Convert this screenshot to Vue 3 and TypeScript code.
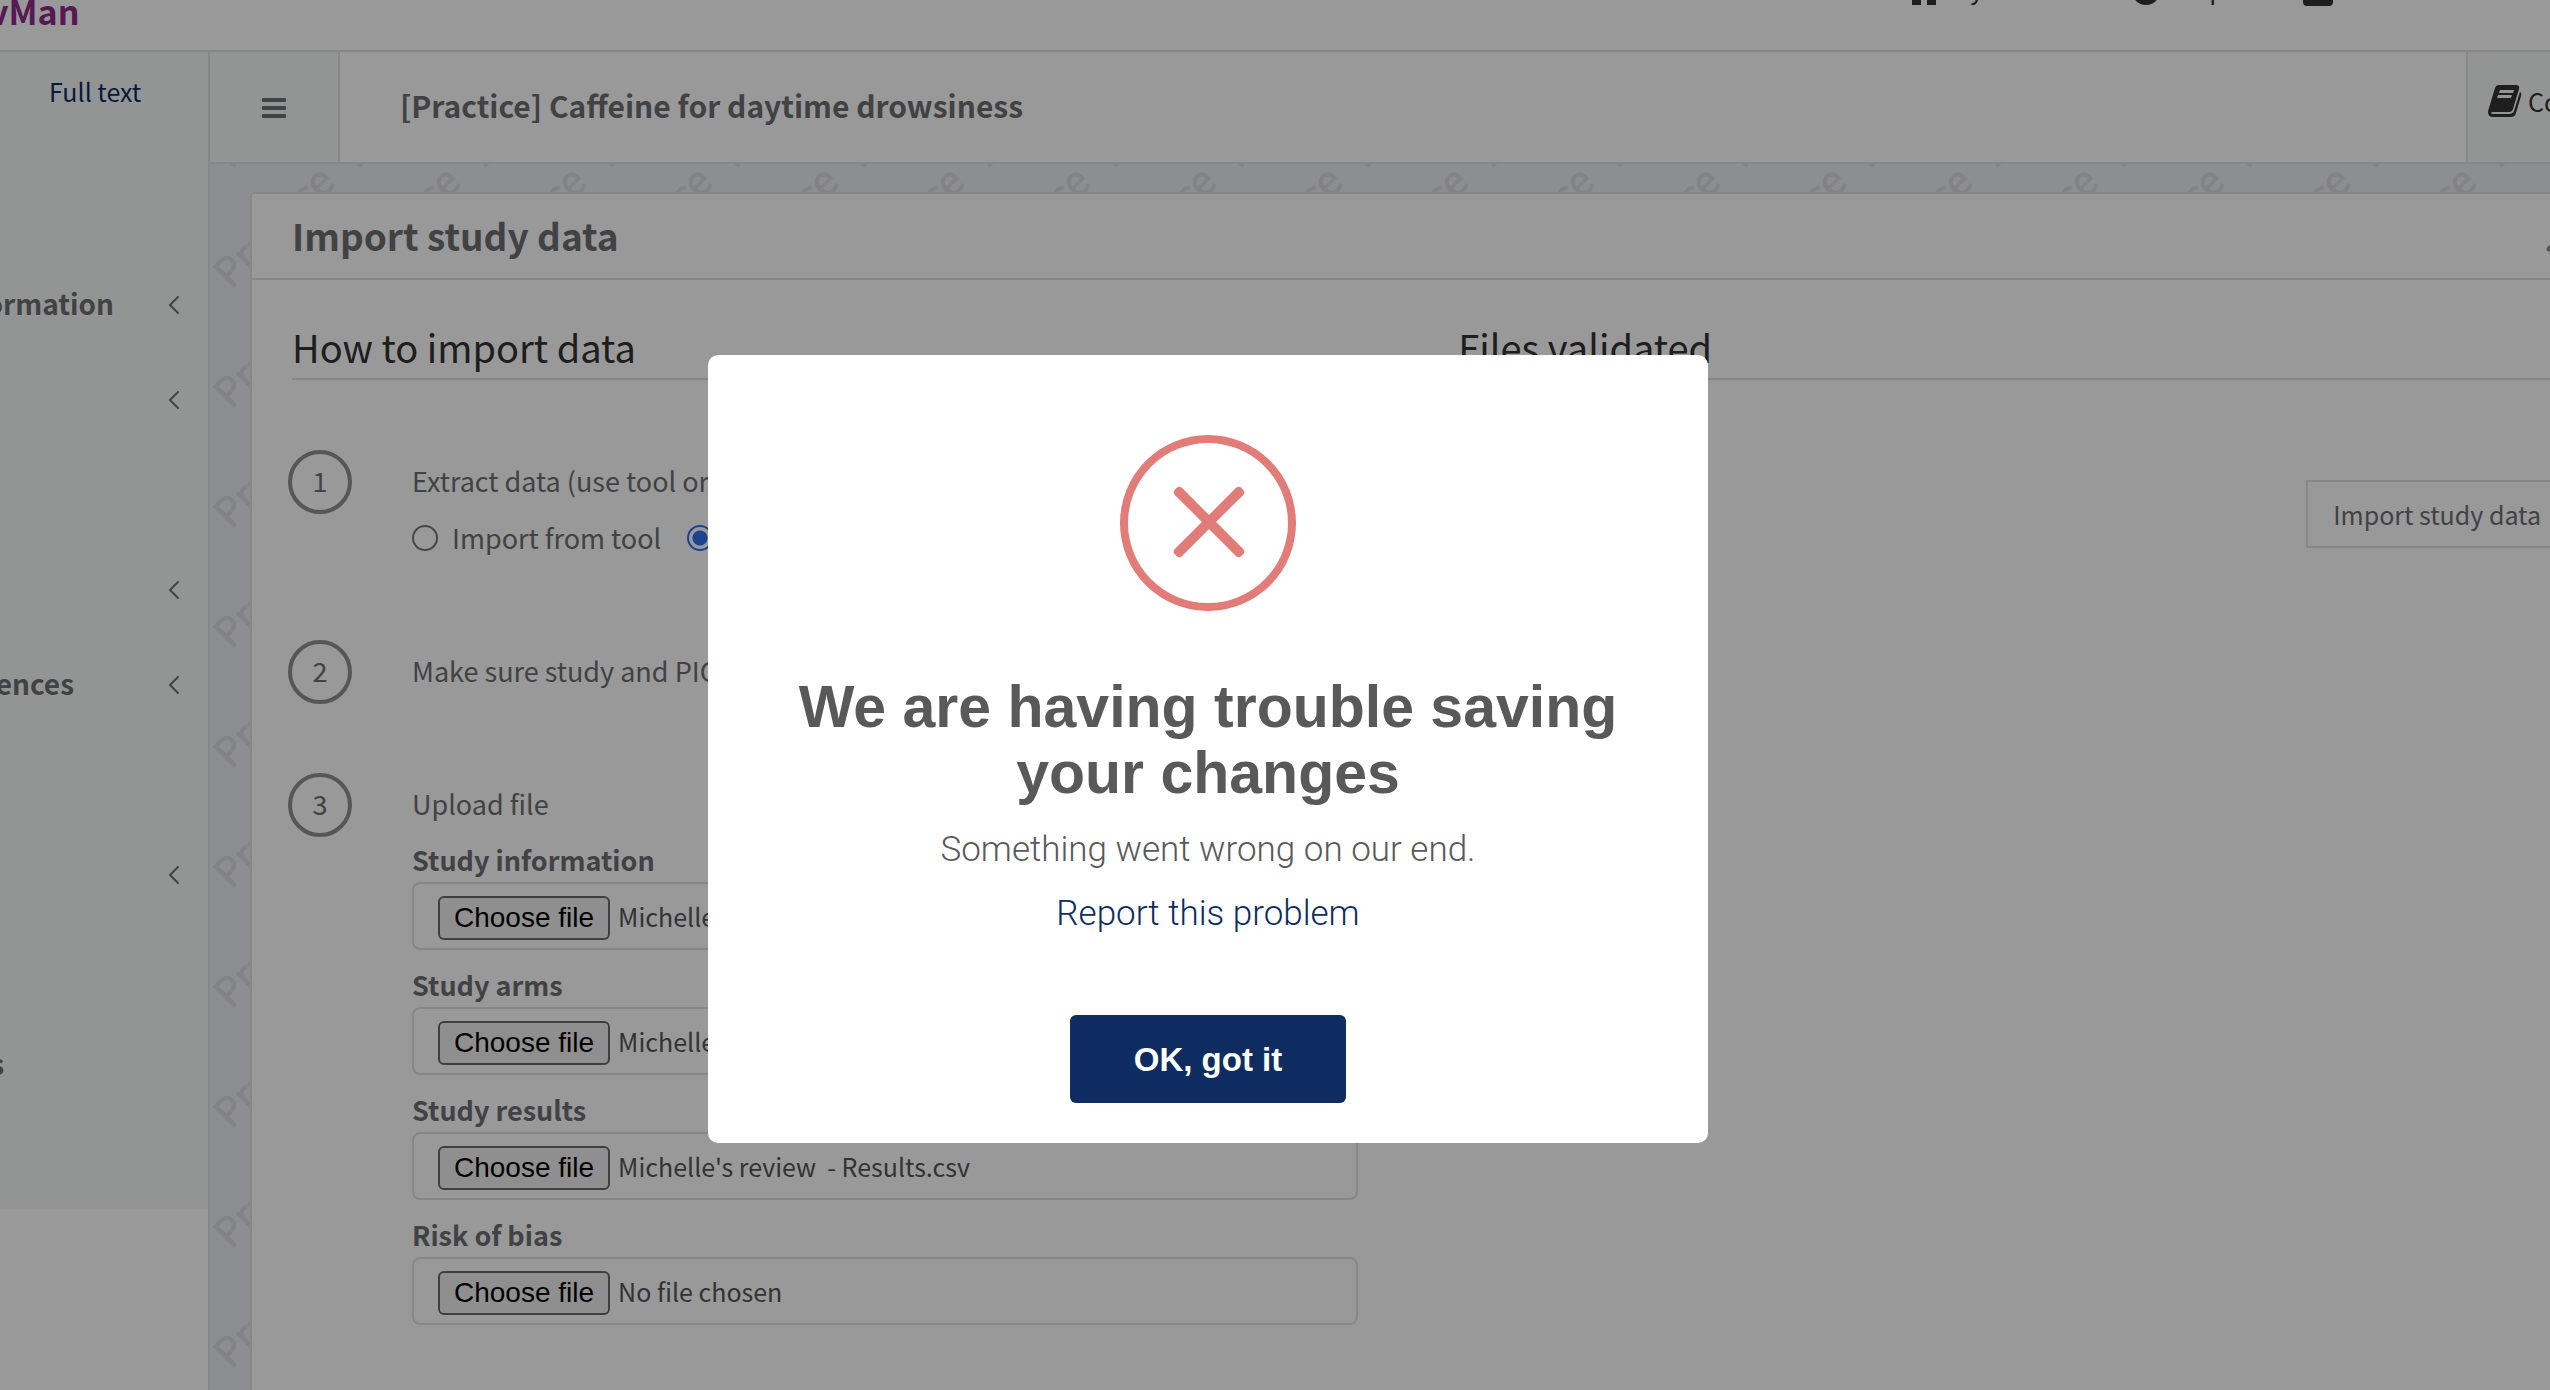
<script setup lang="ts">
import { ref } from 'vue'

interface NavItem {
  label: string
  width: number
  expandable: boolean
}

interface FileField {
  id: string
  label: string
  file: string
}

const navItems: NavItem[] = [
  { label: 'ormation', width: 114, expandable: true },
  { label: '', width: 74, expandable: true },
  { label: '', width: 74, expandable: false },
  { label: '', width: 74, expandable: true },
  { label: 'ences', width: 74, expandable: true },
  { label: '', width: 74, expandable: false },
  { label: '', width: 74, expandable: true },
  { label: '', width: 74, expandable: false },
  { label: 's', width: 4, expandable: false },
  { label: '', width: 74, expandable: false },
]

const fields = ref<FileField[]>([
  { id: 'study-information', label: 'Study information', file: "Michelle's review  - Info.csv" },
  { id: 'study-arms', label: 'Study arms', file: "Michelle's review  - Arms.csv" },
  { id: 'study-results', label: 'Study results', file: "Michelle's review  - Results.csv" },
  { id: 'risk-of-bias', label: 'Risk of bias', file: 'No file chosen' },
])

const source = ref('csv')

function browse(id: string) {
  document.getElementById(id)?.click()
}

function pick(field: FileField, event: Event) {
  const chosen = (event.target as HTMLInputElement).files?.[0]
  field.file = chosen ? chosen.name : 'No file chosen'
}
</script>

<template>
  <div class="app">
    <header class="topbar">
      <a class="brand" href="#">vMan</a>
      <nav class="topnav">
        <a href="#" class="top-home">
          <svg width="32" height="28" viewBox="0 0 32 28"><path d="M16 0 32 14h-4v14h-9v-9h-6v9H4V14H0z" /></svg>
          My Reviews
        </a>
        <a href="#" class="top-help">
          <svg width="28" height="28" viewBox="0 0 28 28">
            <circle cx="14" cy="14" r="14" />
            <path d="M10 11a4 4 0 1 1 6 3q-2 1-2 3M14 20v3" fill="none" stroke="#fff" stroke-width="3" />
          </svg>
          Help
        </a>
        <a href="#" class="top-user">
          <svg width="30" height="30" viewBox="0 0 30 30"><circle cx="15" cy="7" r="7" /><path d="M0 22q0-7 7-7h16q7 0 7 7v4q0 4-4 4H4q-4 0-4-4z" /></svg>
          Cochrane member
        </a>
      </nav>
    </header>

    <div class="shell">
      <aside class="sidebar">
        <nav class="menu">
          <div class="submenu"><a href="#">Full text</a></div>
          <a v-for="(item, i) in navItems" :key="i" class="menu-item" href="#">
            <span class="menu-label" :style="{ width: item.width + 'px' }">{{ item.label }}</span>
            <svg v-if="item.expandable" class="menu-arrow" width="12" height="20" viewBox="0 0 12 20">
              <path d="M10 2 2 10l8 8" />
            </svg>
          </a>
        </nav>
      </aside>

      <div class="main">
        <div class="titlebar">
          <button class="burger" type="button" aria-label="Toggle menu">
            <svg width="24" height="20" viewBox="0 0 24 20">
              <rect width="24" height="4" rx="1" /><rect y="8" width="24" height="4" rx="1" /><rect y="16" width="24" height="4" rx="1" />
            </svg>
          </button>
          <h1 class="review-title">[Practice] Caffeine for daytime drowsiness</h1>
          <button class="comments" type="button">
            <svg width="34" height="32" viewBox="0 0 34 32">
              <path fill-rule="evenodd" d="M11 0h17q4 0 3 4l-6 20q-1 3-4 3H5q-2 0-2 1t2 1h16q4 0 5-3L32 7q2 1 1 4l-5 17q-1 4-5 4H5q-5 0-5-5 0-2 1-4L7 3q1-3 4-3zM12 5l-1 3h14l1-3zM10 10l-1 3h14l1-3z" />
            </svg>
            <span>Comments</span>
          </button>
        </div>

        <div class="canvas">
          <svg class="watermark" width="100%" height="100%" aria-hidden="true">
            <defs>
              <pattern id="practice" width="126" height="120" patternUnits="userSpaceOnUse">
                <text transform="translate(21 126) rotate(-45)">Practice</text>
                <text transform="translate(-105 126) rotate(-45)">Practice</text>
                <text transform="translate(21 6) rotate(-45)">Practice</text>
                <text transform="translate(21 246) rotate(-45)">Practice</text>
                <text transform="translate(-105 246) rotate(-45)">Practice</text>
              </pattern>
            </defs>
            <rect width="100%" height="100%" fill="url(#practice)" />
          </svg>

          <section class="card">
            <div class="card-head">
              <h2>Import study data</h2>
              <button class="collapse" type="button" aria-label="Collapse">
                <svg width="22" height="14" viewBox="0 0 22 14"><path d="M3 9 11 2l8 7" fill="none" stroke="currentColor" stroke-width="5" stroke-linecap="round" /></svg>
              </button>
            </div>
            <div class="card-body">
              <div class="column">
                <h3>How to import data</h3>
                <ol class="steps">
                  <li class="step">
                    <span class="number">1</span>
                    <div class="step-body">
                      <p>Extract data (use tool or CSV)</p>
                      <div class="radios">
                        <label><input v-model="source" type="radio" name="source" value="tool" />Import from tool</label>
                        <label><input v-model="source" type="radio" name="source" value="csv" />Import from CSV</label>
                      </div>
                    </div>
                  </li>
                  <li class="step">
                    <span class="number">2</span>
                    <div class="step-body"><p>Make sure study and PICO names match</p></div>
                  </li>
                  <li class="step">
                    <span class="number">3</span>
                    <div class="step-body">
                      <p>Upload file</p>
                      <div class="files">
                        <div v-for="field in fields" :key="field.id" class="field">
                          <label :for="field.id">{{ field.label }}</label>
                          <div class="file-box">
                            <button type="button" @click="browse(field.id)">Choose file</button>
                            <span class="file-name">{{ field.file }}</span>
                            <input :id="field.id" type="file" accept=".csv" hidden @change="pick(field, $event)" />
                          </div>
                        </div>
                      </div>
                    </div>
                  </li>
                </ol>
              </div>
              <div class="column">
                <h3>Files validated</h3>
                <button class="import" type="button">Import study data</button>
              </div>
            </div>
          </section>
        </div>
      </div>
    </div>

    <div class="overlay">
      <div class="modal" role="alertdialog" aria-labelledby="modal-title" aria-describedby="modal-text">
        <svg class="modal-icon" width="176" height="176" viewBox="0 0 176 176">
          <circle cx="88" cy="88" r="84" fill="none" stroke="#e27c79" stroke-width="8" />
          <g transform="translate(89 87)" fill="#e27c79">
            <rect x="-47" y="-5" width="94" height="10" rx="4" transform="rotate(45)" />
            <rect x="-47" y="-5" width="94" height="10" rx="4" transform="rotate(-45)" />
          </g>
        </svg>
        <h2 id="modal-title">We are having trouble saving your changes</h2>
        <p id="modal-text">Something went wrong on our end.</p>
        <a href="#">Report this problem</a>
        <button type="button">OK, got it</button>
      </div>
    </div>
  </div>
</template>

<style>
html,
body {
  margin: 0;
  background: #fff;
}
</style>

<style scoped>
* {
  box-sizing: border-box;
}

.app {
  display: flex;
  flex-direction: column;
  min-height: 100vh;
  overflow: hidden;
  position: relative;
  background: #fff;
  color: #6c6f72;
  font-family: 'Noto Sans CJK SC', 'Noto Sans', sans-serif;
  font-size: 27px;
}

h1, h2, h3, p, ol {
  margin: 0;
  padding: 0;
  font-weight: 400;
}

a {
  text-decoration: none;
  color: inherit;
}

button {
  font: inherit;
  color: inherit;
  margin: 0;
  padding: 0;
  border: 0;
  background: none;
}

.topbar {
  display: flex;
  justify-content: space-between;
  height: 52px;
  border-bottom: 2px solid #e1e2e2;
  overflow: hidden;
}

.brand {
  margin: -13px 0 0 -11px;
  color: #912b8f;
  font-size: 34px;
  font-weight: 700;
  line-height: 48px;
}

.topnav {
  display: flex;
  margin-top: -32px;
  height: 40px;
  color: #323232;
  font-size: 25px;
  line-height: 40px;
  white-space: nowrap;
}

.topnav a {
  display: flex;
  align-items: center;
  gap: 10px;
}

.topnav svg {
  fill: currentColor;
  flex: none;
  margin-top: 6px;
}

.top-home {
  width: 224px;
}

.top-help {
  width: 171px;
}

.top-user {
  width: 247px;
}

.shell {
  display: flex;
  flex: 1;
}

.sidebar {
  flex: none;
  width: 210px;
  border-right: 2px solid #e1e2e2;
}

.menu {
  background: #f5f9f7;
  height: 1157px;
}

.submenu {
  height: 205px;
  padding: 18px 0 0 49px;
  color: #0e2c5f;
  font-size: 25px;
  line-height: 42px;
}

.menu-item {
  display: flex;
  align-items: center;
  justify-content: space-between;
  height: 95px;
  padding-right: 28px;
  font-size: 28px;
  font-weight: 700;
}

.menu-label {
  display: flex;
  justify-content: flex-end;
  padding-bottom: 3px;
  overflow: hidden;
}

.menu-arrow {
  flex: none;
  fill: none;
  stroke: currentColor;
  stroke-width: 2;
  stroke-linecap: round;
}

.main {
  flex: 1;
  min-width: 0;
  display: flex;
  flex-direction: column;
}

.titlebar {
  display: flex;
  height: 112px;
  border-bottom: 2px solid #e1e2e2;
}

.burger {
  width: 130px;
  background: #f5f9f7;
  border-right: 2px solid #e1e2e2;
}

.burger svg {
  display: block;
  margin: 2px auto 0 52px;
  fill: currentColor;
}

.review-title {
  flex: 1;
  padding-left: 60px;
  font-size: 30px;
  font-weight: 700;
  line-height: 106px;
}

.comments {
  display: flex;
  align-items: center;
  gap: 6px;
  width: 84px;
  padding: 0 0 12px 20px;
  overflow: hidden;
  background: #f5f9f7;
  border-left: 2px solid #e1e2e2;
  color: #323232;
  font-size: 25px;
}

.comments svg {
  flex: none;
  fill: currentColor;
}

.canvas {
  flex: 1;
  display: flex;
  position: relative;
  padding: 28px 0 0 40px;
  background: #ebedf3;
}

.watermark {
  position: absolute;
  inset: 0;
}

.watermark text {
  fill: #dadbde;
  stroke: #dadbde;
  stroke-width: 1px;
  font-size: 40px;
}

.card {
  position: relative;
  flex: 1;
  margin-right: -60px;
  background: #fff;
  border: 2px solid #e1e2e2;
  border-bottom: 0;
  border-radius: 4px 4px 0 0;
}

.card-head {
  display: flex;
  align-items: center;
  justify-content: space-between;
  height: 86px;
  padding: 0 40px;
  border-bottom: 2px solid #e1e2e2;
}

.card-head h2 {
  padding-bottom: 2px;
  font-size: 37px;
  font-weight: 700;
  line-height: 82px;
}

.collapse {
  margin-top: 12px;
  color: #8f8f8f;
}

.card-body {
  display: grid;
  grid-template-columns: 49fr 51fr;
  column-gap: 100px;
  padding: 38px 40px 60px;
}

.column {
  display: flex;
  flex-direction: column;
}

.column h3 {
  height: 62px;
  border-bottom: 2px solid #e1e2e2;
  color: #323232;
  font-size: 38px;
  line-height: 58px;
}

.steps {
  display: flex;
  flex-direction: column;
  gap: 69px;
  margin: 70px 0 0 -4px;
  list-style: none;
}

.step {
  display: flex;
  gap: 60px;
}

.number {
  flex: none;
  width: 64px;
  height: 64px;
  border: 4px solid #8f8f8f;
  border-radius: 50%;
  line-height: 54px;
  text-align: center;
}

.step-body {
  flex: 1;
  padding-top: 2px;
  line-height: 57px;
}

.radios {
  display: flex;
  gap: 26px;
  margin-bottom: 5px;
}

.radios label {
  display: flex;
  align-items: center;
  gap: 14px;
}

.radios input {
  appearance: none;
  width: 26px;
  height: 26px;
  margin: 0;
  border: 2px solid #767676;
  border-radius: 50%;
}

.radios input:checked {
  border-color: #2d71f3;
  background: radial-gradient(circle, #2d71f3 7px, transparent 8px);
}

.files {
  display: flex;
  flex-direction: column;
  gap: 13px;
  margin-top: 6px;
}

.field label {
  display: block;
  font-weight: 700;
  line-height: 44px;
}

.file-box {
  display: flex;
  align-items: center;
  gap: 8px;
  height: 68px;
  padding: 0 24px;
  border: 2px solid #e1e2e2;
  border-radius: 8px;
  color: #555;
}

.file-box button {
  height: 44px;
  margin-top: 4px;
  padding: 0 14px;
  border: 2px solid #6a6a6a;
  border-radius: 6px;
  background: #efefef;
  color: #000;
  font-family: 'Liberation Sans', Arial, sans-serif;
  font-size: 28px;
  line-height: 40px;
}

.file-name {
  font-size: 25px;
  white-space: pre;
}

.import {
  align-self: flex-end;
  height: 68px;
  margin-top: 100px;
  padding: 0 25px;
  border: 2px solid #e1e2e2;
  font-size: 25px;
  line-height: 60px;
}

.overlay {
  position: absolute;
  inset: 0;
  display: flex;
  align-items: center;
  justify-content: center;
  padding: 108px 134px 0 0;
  background: rgba(0, 0, 0, 0.4);
}

.modal {
  display: flex;
  flex-direction: column;
  align-items: center;
  width: 1000px;
  padding: 80px 40px 40px;
  border-radius: 10px;
  background: #fff;
  color: #595959;
  font-family: 'Liberation Sans', Arial, sans-serif;
  font-size: 35px;
  line-height: 64px;
  text-align: center;
}

.modal h2 {
  margin: 63px 0 12px;
  font-size: 59px;
  font-weight: 700;
  line-height: 66px;
}

.modal p,
.modal a {
  font-family: Roboto, 'Liberation Sans', sans-serif;
  font-weight: 300;
}

.modal a {
  color: #0e2c5f;
}

.modal button {
  height: 88px;
  margin-top: 69px;
  padding: 2px 64px 0;
  border-radius: 6px;
  background: #0e2c5f;
  color: #fff;
  font-size: 33px;
  font-weight: 700;
}
</style>
